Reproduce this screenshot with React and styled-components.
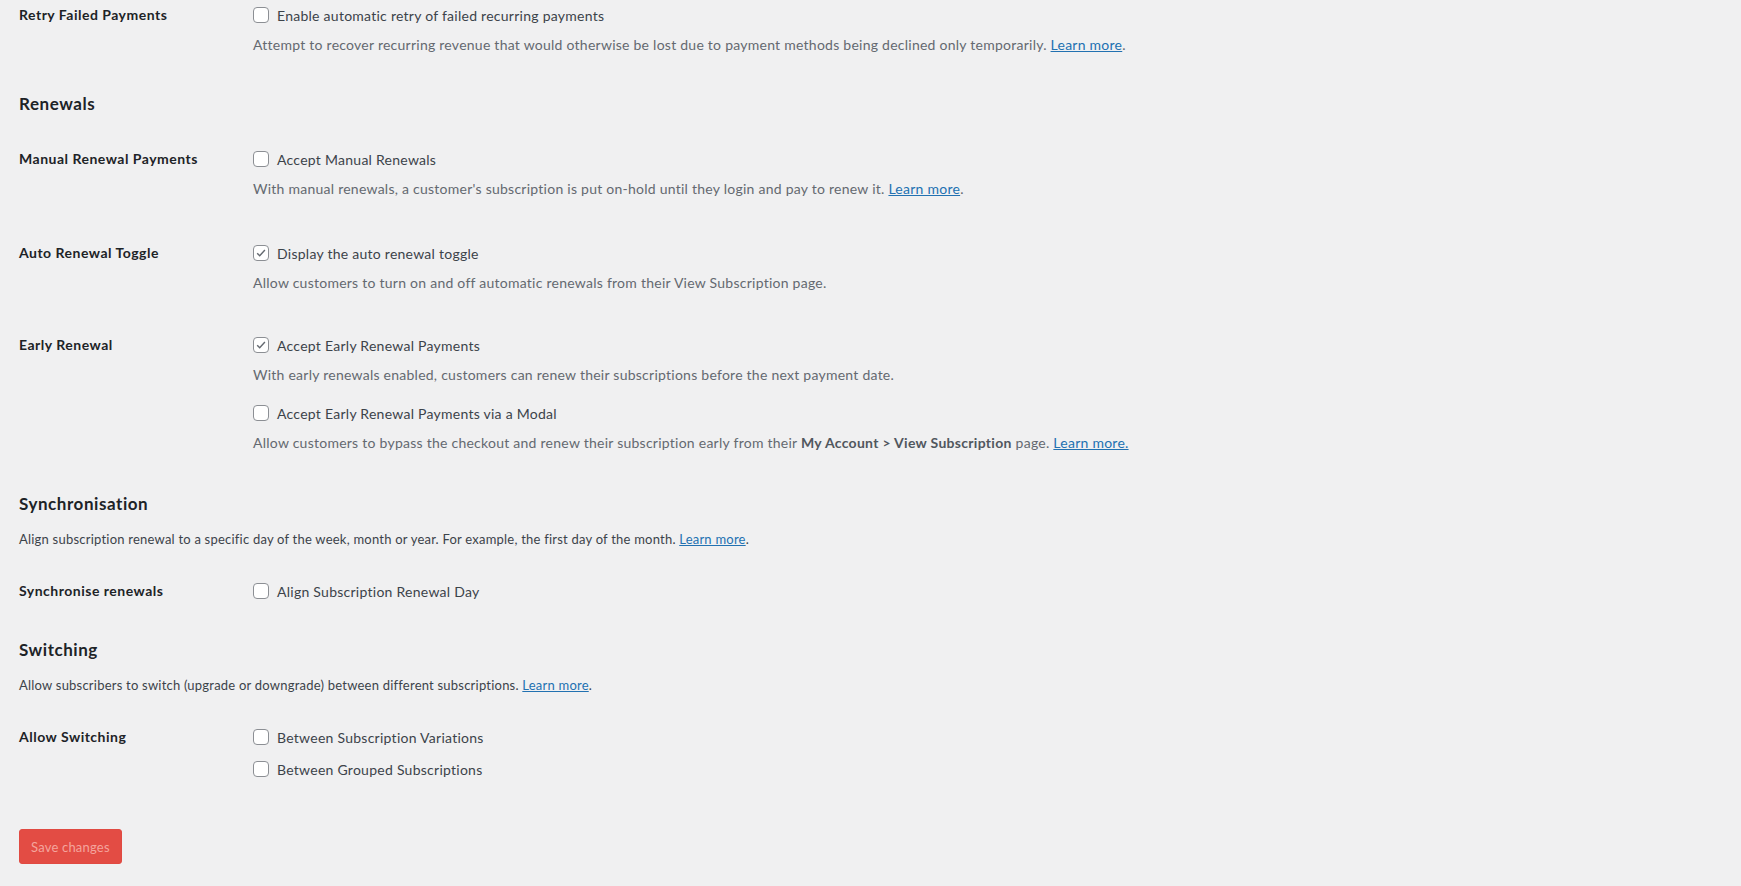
import React from "react";
import styled, { createGlobalStyle } from "styled-components";

const GlobalStyle = createGlobalStyle`
  html, body { margin: 0; padding: 0; background: #f0f0f1; }
  body { font-family: Lato, "Open Sans", sans-serif; color: #3c434a; }
`;

const Page = styled.div`
  display: flex;
  flex-direction: column;
  align-items: flex-start;
  padding: 3px 19px 22px;
`;

const SettingRow = styled.div`
  display: grid;
  grid-template-columns: 234px 1fr;
  width: 100%;
  margin-top: ${(p) => p.$top || 0}px;
`;

const RowLabel = styled.div`
  font-size: 14px;
  font-weight: 700;
  line-height: 24px;
  letter-spacing: 0.5px;
  color: #1d2327;
`;

const Options = styled.div`
  display: flex;
  flex-direction: column;
`;

const OptionLine = styled.label`
  display: flex;
  align-items: center;
  gap: 8px;
  height: 24px;
  font-size: 14px;
  letter-spacing: 0.26px;
  color: #3c434a;
  margin-top: ${(p) => p.$top || 0}px;
`;

const Box = styled.span`
  width: 16px;
  height: 16px;
  box-sizing: border-box;
  border: 1px solid #8c8f94;
  border-radius: 4px;
  background: #fff;
  display: inline-flex;
  align-items: center;
  justify-content: center;
  flex: none;
`;

const Description = styled.p`
  margin: 6px 0 0;
  font-size: 14px;
  line-height: 24px;
  letter-spacing: 0.25px;
  color: #646970;
  strong { color: #50575e; font-weight: 700; letter-spacing: 0.3px; }
`;

const SectionTitle = styled.h2`
  margin: ${(p) => p.$top}px 0 0;
  font-size: 17px;
  line-height: 24px;
  font-weight: 700;
  letter-spacing: 0.55px;
  color: #1d2327;
`;

const SectionIntro = styled.p`
  margin: 11px 0 0;
  font-size: 13px;
  line-height: 24px;
  letter-spacing: 0.22px;
  color: #3c434a;
`;

const Link = styled.a`
  color: #2271b1;
  text-decoration: underline;
`;

const SaveButton = styled.button`
  margin-top: 48px;
  height: 35px;
  padding: 0 11px;
  border: 1px solid #e04a42;
  border-radius: 3px;
  background: #e34c44;
  color: #f4a49d;
  font-family: inherit;
  font-size: 13px;
  letter-spacing: 0.2px;
`;

function Check({ checked, children, top }) {
  return (
    <OptionLine $top={top}>
      <Box>
        {checked && (
          <svg width="12" height="12" viewBox="0 0 12 12">
            <path d="M2.2 6.2l2.5 2.6L9.9 3" fill="none" stroke="#646970" strokeWidth="1.4" />
          </svg>
        )}
      </Box>
      {children}
    </OptionLine>
  );
}

export default function App() {
  return (
    <>
      <GlobalStyle />
      <Page>
        <SettingRow>
          <RowLabel>Retry Failed Payments</RowLabel>
          <Options>
            <Check>Enable automatic retry of failed recurring payments</Check>
            <Description>
              Attempt to recover recurring revenue that would otherwise be lost due to payment methods being declined only temporarily. <Link href="#">Learn more</Link>.
            </Description>
          </Options>
        </SettingRow>

        <SectionTitle $top={35}>Renewals</SectionTitle>

        <SettingRow $top={31}>
          <RowLabel>Manual Renewal Payments</RowLabel>
          <Options>
            <Check>Accept Manual Renewals</Check>
            <Description>
              With manual renewals, a customer's subscription is put on-hold until they login and pay to renew it. <Link href="#">Learn more</Link>.
            </Description>
          </Options>
        </SettingRow>

        <SettingRow $top={40}>
          <RowLabel>Auto Renewal Toggle</RowLabel>
          <Options>
            <Check checked>Display the auto renewal toggle</Check>
            <Description>Allow customers to turn on and off automatic renewals from their View Subscription page.</Description>
          </Options>
        </SettingRow>

        <SettingRow $top={38}>
          <RowLabel>Early Renewal</RowLabel>
          <Options>
            <Check checked>Accept Early Renewal Payments</Check>
            <Description>With early renewals enabled, customers can renew their subscriptions before the next payment date.</Description>
            <Check top={14}>Accept Early Renewal Payments via a Modal</Check>
            <Description>
              Allow customers to bypass the checkout and renew their subscription early from their <strong>My Account &gt; View Subscription</strong> page. <Link href="#">Learn more.</Link>
            </Description>
          </Options>
        </SettingRow>

        <SectionTitle $top={37}>Synchronisation</SectionTitle>
        <SectionIntro>
          Align subscription renewal to a specific day of the week, month or year. For example, the first day of the month. <Link href="#">Learn more</Link>.
        </SectionIntro>

        <SettingRow $top={28}>
          <RowLabel>Synchronise renewals</RowLabel>
          <Options>
            <Check>Align Subscription Renewal Day</Check>
          </Options>
        </SettingRow>

        <SectionTitle $top={35}>Switching</SectionTitle>
        <SectionIntro>
          Allow subscribers to switch (upgrade or downgrade) between different subscriptions. <Link href="#">Learn more</Link>.
        </SectionIntro>

        <SettingRow $top={28}>
          <RowLabel>Allow Switching</RowLabel>
          <Options>
            <Check>Between Subscription Variations</Check>
            <Check top={8}>Between Grouped Subscriptions</Check>
          </Options>
        </SettingRow>

        <SaveButton type="button">Save changes</SaveButton>
      </Page>
    </>
  );
}
